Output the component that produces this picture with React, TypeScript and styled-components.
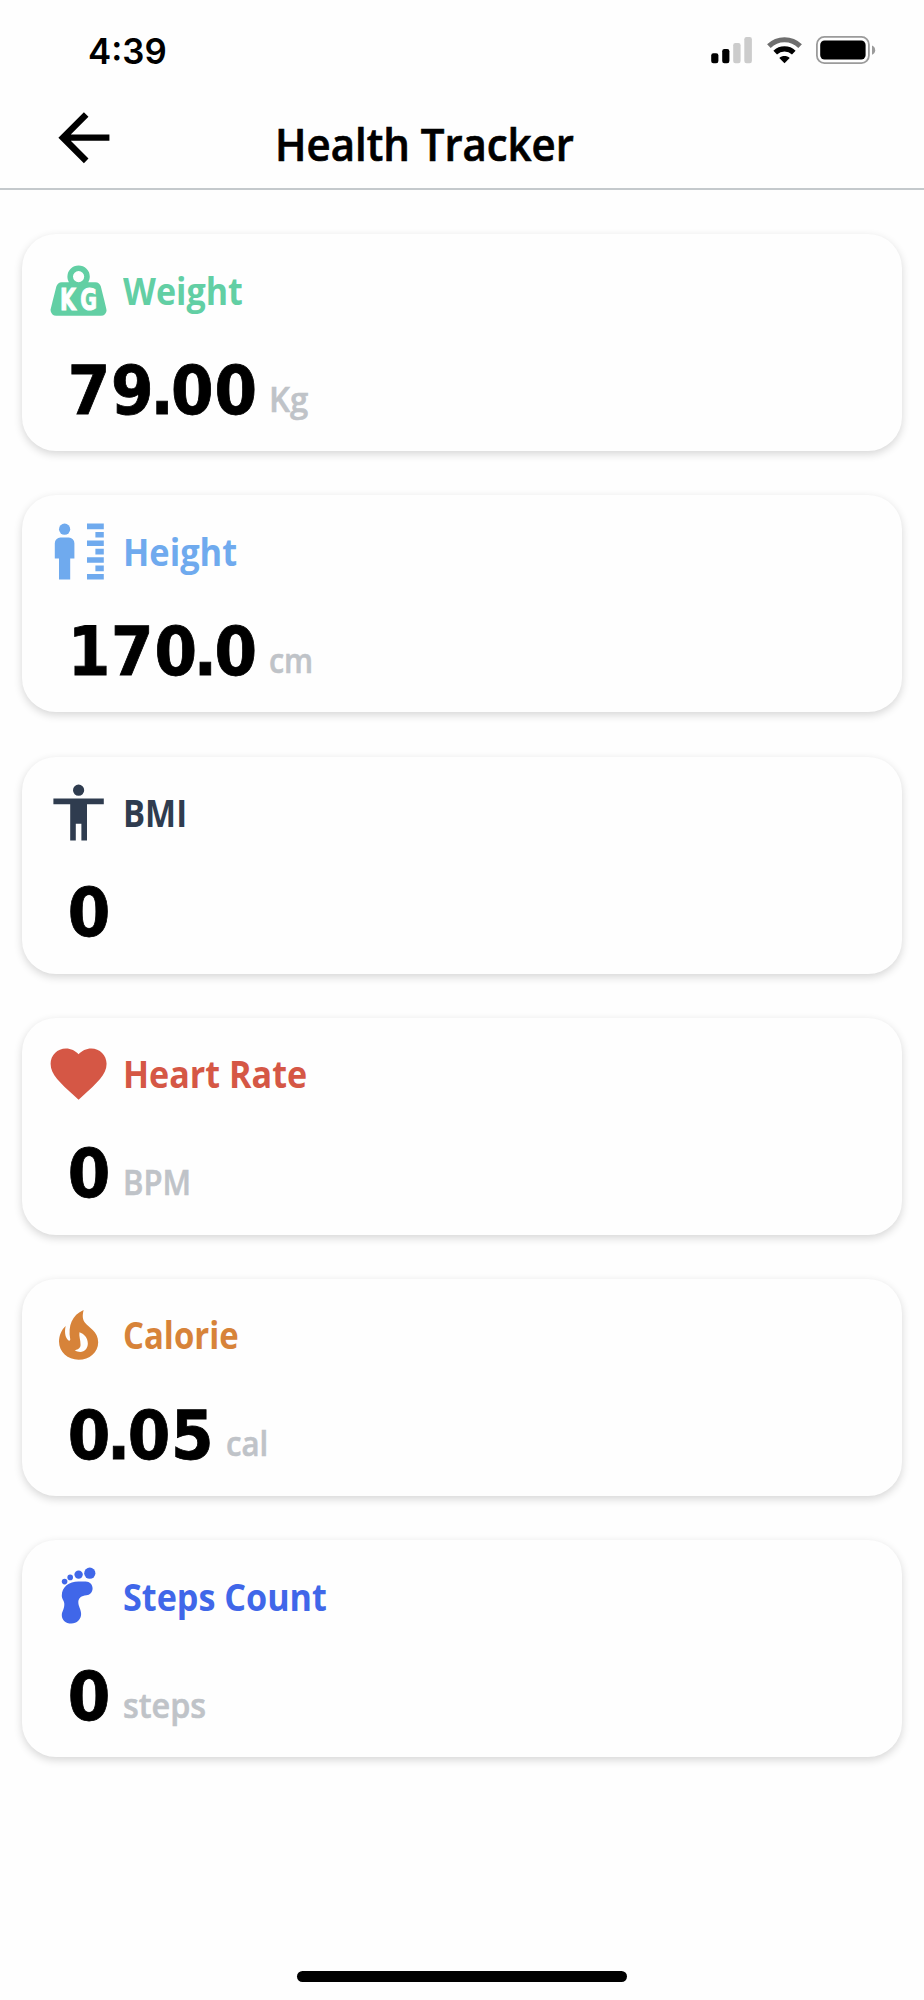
import React from "react";
import styled, { createGlobalStyle } from "styled-components";

const GlobalStyle = createGlobalStyle`
  * { box-sizing: border-box; }
  body { margin: 0; background: #fefefe; }
`;

const Screen = styled.div`
  width: 924px;
  height: 2000px;
  display: flex;
  flex-direction: column;
  align-items: stretch;
  background: #fefefe;
  overflow: hidden;
  font-family: "Open Sans", "Noto Sans", sans-serif;
  white-space: nowrap;
`;

const StatusBar = styled.div`
  height: 98px;
  flex: none;
  display: flex;
  justify-content: space-between;
  align-items: flex-start;
  padding: 31px 48px 0 88px;
`;

const Clock = styled.div`
  font-family: Inter, sans-serif;
  font-size: 34.8px;
  font-weight: 600;
  line-height: 41px;
  color: #000;
`;

const StatusIcons = styled.div`
  display: flex;
  align-items: center;
  gap: 14px;
  padding-top: 5px;
`;

const Header = styled.header`
  height: 92px;
  flex: none;
  display: flex;
  align-items: flex-start;
  padding-left: 45.3px;
  border-bottom: 2px solid #c4c9cc;
`;

const BackIcon = styled.svg`
  width: 77.3px;
  height: 77.3px;
  margin-top: 0.7px;
  fill: #000;
`;

const PageTitle = styled.h1`
  margin: 14px 0 0 152.5px;
  font-size: 46px;
  line-height: 62px;
  font-weight: 600;
  color: #000;
  -webkit-text-stroke: 0.7px currentColor;
  transform: scaleX(0.911);
  transform-origin: left;
`;

const CardList = styled.main`
  flex: 1;
  display: flex;
  flex-direction: column;
  gap: 44.2px;
  padding: 44.3px 22px 0;
`;

const Card = styled.section`
  flex: none;
  height: 217px;
  padding: 22.3px 22.7px 0;
  border-radius: 34px;
  background: #fefefe;
  box-shadow: 0 3px 8px rgba(0, 0, 0, 0.16);
`;

const CardHead = styled.div<{ $color: string }>`
  display: flex;
  align-items: center;
  height: 67px;
  gap: 11px;
  color: ${(p) => p.$color};
`;

const CardIcon = styled.svg`
  width: 67.2px;
  height: 67.2px;
  flex: none;
  fill: currentColor;
`;

const IconLetter = styled.text`
  font-family: "DejaVu Sans Condensed", sans-serif;
  font-weight: 700;
  font-size: 10.7px;
  fill: #fff;
  stroke: #fff;
  stroke-width: 0.35px;
`;

const CardTitle = styled.h2<{ $fit: number }>`
  margin: 1px 0 0;
  font-size: 37px;
  line-height: 50px;
  font-weight: 700;
  transform: scaleX(${(p) => p.$fit});
  transform-origin: left;
`;

const Reading = styled.div`
  display: flex;
  align-items: baseline;
  gap: 11.5px;
  height: 80px;
  margin-top: 27.3px;
  padding-left: 23px;
`;

const Value = styled.span`
  font-family: "DejaVu Sans Condensed", "DejaVu Sans", sans-serif;
  font-stretch: condensed;
  font-size: 68px;
  line-height: 80px;
  font-weight: 700;
  letter-spacing: 0.8px;
  color: #000;
  -webkit-text-stroke: 0.8px currentColor;
`;

const Point = styled.span`
  margin: 0 -3.4px 0 -4px;
`;

const Unit = styled.span<{ $fit: number }>`
  position: relative;
  top: -2.2px;
  font-size: 35px;
  line-height: 48px;
  font-weight: 600;
  color: #bfc3c8;
  -webkit-text-stroke: 0.6px currentColor;
  transform: scaleX(${(p) => p.$fit});
  transform-origin: left;
`;

const HomeArea = styled.footer`
  flex: none;
  height: 29px;
  display: flex;
  justify-content: center;
`;

const HomeIndicator = styled.div`
  width: 330px;
  height: 11px;
  border-radius: 6px;
  background: #000;
`;

const SignalIcon = () => (
  <svg width="42" height="28" viewBox="0 0 42 28">
    <rect x="0.2" y="17.3" width="7.2" height="10" rx="2.2" />
    <rect x="11.2" y="13" width="7.2" height="14.3" rx="2.2" />
    <rect x="22.2" y="7" width="7.4" height="20.3" rx="2.2" fill="#cccccc" />
    <rect x="33.3" y="1" width="7.6" height="26.3" rx="2.2" fill="#cccccc" />
  </svg>
);

const WifiIcon = () => (
  <svg width="35" height="28" viewBox="0 0 35 28">
    <g fill="none" strokeWidth="5.2">
      <path d="M1.9 10.1A22.4 22.4 0 0 1 33.1 10.1" stroke="#6e6e6e" />
      <path d="M8.2 16.6A13.4 13.4 0 0 1 26.8 16.6" stroke="#000" />
    </g>
    <path d="M17.5 27.3L12.3 21.9C15.3 19.3 19.7 19.3 22.7 21.9Z" />
  </svg>
);

const BatteryIcon = () => (
  <svg width="60" height="28" viewBox="0 0 60 28">
    <rect x="0.9" y="0.9" width="52" height="26.2" rx="7.5" fill="none" stroke="#9b9b9b" strokeWidth="1.8" />
    <rect x="4.2" y="4.5" width="45.4" height="19" rx="4.4" />
    <path d="M56 9.5C58 10.3 59.2 12 59.2 14.2C59.2 16.3 58 18 56 18.8Z" fill="#9b9b9b" />
  </svg>
);

interface Metric {
  title: string;
  titleFit: number;
  value: string;
  unit?: string;
  unitFit?: number;
  color: string;
  icon: React.ReactNode;
}

const metrics: Metric[] = [
  {
    title: "Weight",
    titleFit: 0.92,
    value: "79.00",
    unit: "Kg",
    unitFit: 0.94,
    color: "#62cfa4",
    icon: (
      <>
        <path
          fillRule="evenodd"
          d="M12,3A4,4 0 0,1 16,7C16,7.73 15.81,8.41 15.46,9H18C18.95,9 19.75,9.67 19.95,10.56C21.96,18.57 22,18.78 22,19A2,2 0 0,1 20,21H4A2,2 0 0,1 2,19C2,18.78 2.04,18.57 4.05,10.56C4.25,9.67 5.05,9 6,9H8.54C8.19,8.41 8,7.73 8,7A4,4 0 0,1 12,3M12,5A2,2 0 0,0 10,7A2,2 0 0,0 12,9A2,2 0 0,0 14,7A2,2 0 0,0 12,5Z"
        />
        <IconLetter x="5.4" y="18.9" textLength="5.7" lengthAdjust="spacingAndGlyphs">
          K
        </IconLetter>
        <IconLetter x="12.6" y="18.9" textLength="6" lengthAdjust="spacingAndGlyphs">
          G
        </IconLetter>
      </>
    ),
  },
  {
    title: "Height",
    titleFit: 0.93,
    value: "170.0",
    unit: "cm",
    unitFit: 0.87,
    color: "#6faaee",
    icon: (
      <>
        <circle cx="7" cy="4" r="2" />
        <path d="M5.5,7H8.5A2,2 0 0,1 10.5,9V14.5H9V22H5V14.5H3.5V9A2,2 0 0,1 5.5,7Z" />
        <path d="M15,2H21V4H15ZM18,5H21V7H18ZM15,8H21V10H15ZM18,11H21V13H18ZM15,14H21V16H15ZM18,17H21V19H18ZM15,20H21V22H15Z" />
      </>
    ),
  },
  {
    title: "BMI",
    titleFit: 0.89,
    value: "0",
    color: "#2f3c4f",
    icon: (
      <path d="M21,9H15V22H13V16H11V22H9V9H3V7H21V9M12,2A2,2 0 0,1 14,4A2,2 0 0,1 12,6A2,2 0 0,1 10,4A2,2 0 0,1 12,2Z" />
    ),
  },
  {
    title: "Heart Rate",
    titleFit: 0.922,
    value: "0",
    unit: "BPM",
    unitFit: 0.885,
    color: "#d55745",
    icon: (
      <path d="M12,21.35L10.55,20.03C5.4,15.36 2,12.27 2,8.5C2,5.41 4.42,3 7.5,3C9.24,3 10.91,3.81 12,5.08C13.09,3.81 14.76,3 16.5,3C19.58,3 22,5.41 22,8.5C22,12.27 18.6,15.36 13.45,20.03L12,21.35Z" />
    ),
  },
  {
    title: "Calorie",
    titleFit: 0.89,
    value: "0.05",
    unit: "cal",
    unitFit: 0.89,
    color: "#d78339",
    icon: (
      <path
        fillRule="evenodd"
        d="M13.8,3.2C13.3,5.2 13.4,6.6 14.3,7.8C15.6,9.5 19,10.9 19,14.7C19,18.3 15.9,21 12,21C8.1,21 5,18.2 5,14.5C5,12.3 5.9,10.2 7.4,8.9C7,10.5 7,12.6 8.2,13.9C8.6,14.4 9.1,14.2 9,13.6C8.2,8.7 9.6,5.1 13.8,3.2ZM12.3,11.2C12.1,12.6 12.7,14 12.7,15.6C12.7,16.8 11.8,17.4 10.6,17.5C11.2,18 11.9,18.2 12.6,18.2C14.2,18.2 15.3,16.9 15.3,15.2C15.3,13.2 13.9,11.7 12.3,11.2Z"
      />
    ),
  },
  {
    title: "Steps Count",
    titleFit: 0.923,
    value: "0",
    unit: "steps",
    unitFit: 0.925,
    color: "#4067e9",
    icon: (
      <>
        <circle cx="16" cy="4" r="2" />
        <circle cx="12" cy="4.5" r="1.5" />
        <circle cx="9" cy="5.5" r="1" />
        <circle cx="7" cy="7" r="1" />
        <path d="M12,7H14.5C16,7 17,8.1 17,9.4C17,10.9 16,11.8 14.8,11.9C13,12 11.9,13 11.9,14.3C11.9,16 12.9,16.8 12.9,18.6C12.9,20.5 11.4,22 9.4,22C7.4,22 6,20.7 6,19C6,17.6 6.9,17 6.9,15C6.9,13.7 6,13.5 6,12C6,9 8.5,7 12,7Z" />
      </>
    ),
  },
];

function Amount({ value }: { value: string }) {
  const [whole, decimals] = value.split(".");
  return (
    <Value>
      {whole}
      {decimals && <Point>.</Point>}
      {decimals}
    </Value>
  );
}

export default function App() {
  return (
    <Screen>
      <GlobalStyle />
      <StatusBar>
        <Clock>4:39</Clock>
        <StatusIcons>
          <SignalIcon />
          <WifiIcon />
          <BatteryIcon />
        </StatusIcons>
      </StatusBar>
      <Header>
        <BackIcon viewBox="0 0 24 24">
          <path d="M20,11V13H8L13.5,18.5L12.08,19.92L4.16,12L12.08,4.08L13.5,5.5L8,11H20Z" />
        </BackIcon>
        <PageTitle>Health Tracker</PageTitle>
      </Header>
      <CardList>
        {metrics.map((m) => (
          <Card key={m.title}>
            <CardHead $color={m.color}>
              <CardIcon viewBox="0 0 24 24">{m.icon}</CardIcon>
              <CardTitle $fit={m.titleFit}>{m.title}</CardTitle>
            </CardHead>
            <Reading>
              <Amount value={m.value} />
              {m.unit && <Unit $fit={m.unitFit ?? 1}>{m.unit}</Unit>}
            </Reading>
          </Card>
        ))}
      </CardList>
      <HomeArea>
        <HomeIndicator />
      </HomeArea>
    </Screen>
  );
}
